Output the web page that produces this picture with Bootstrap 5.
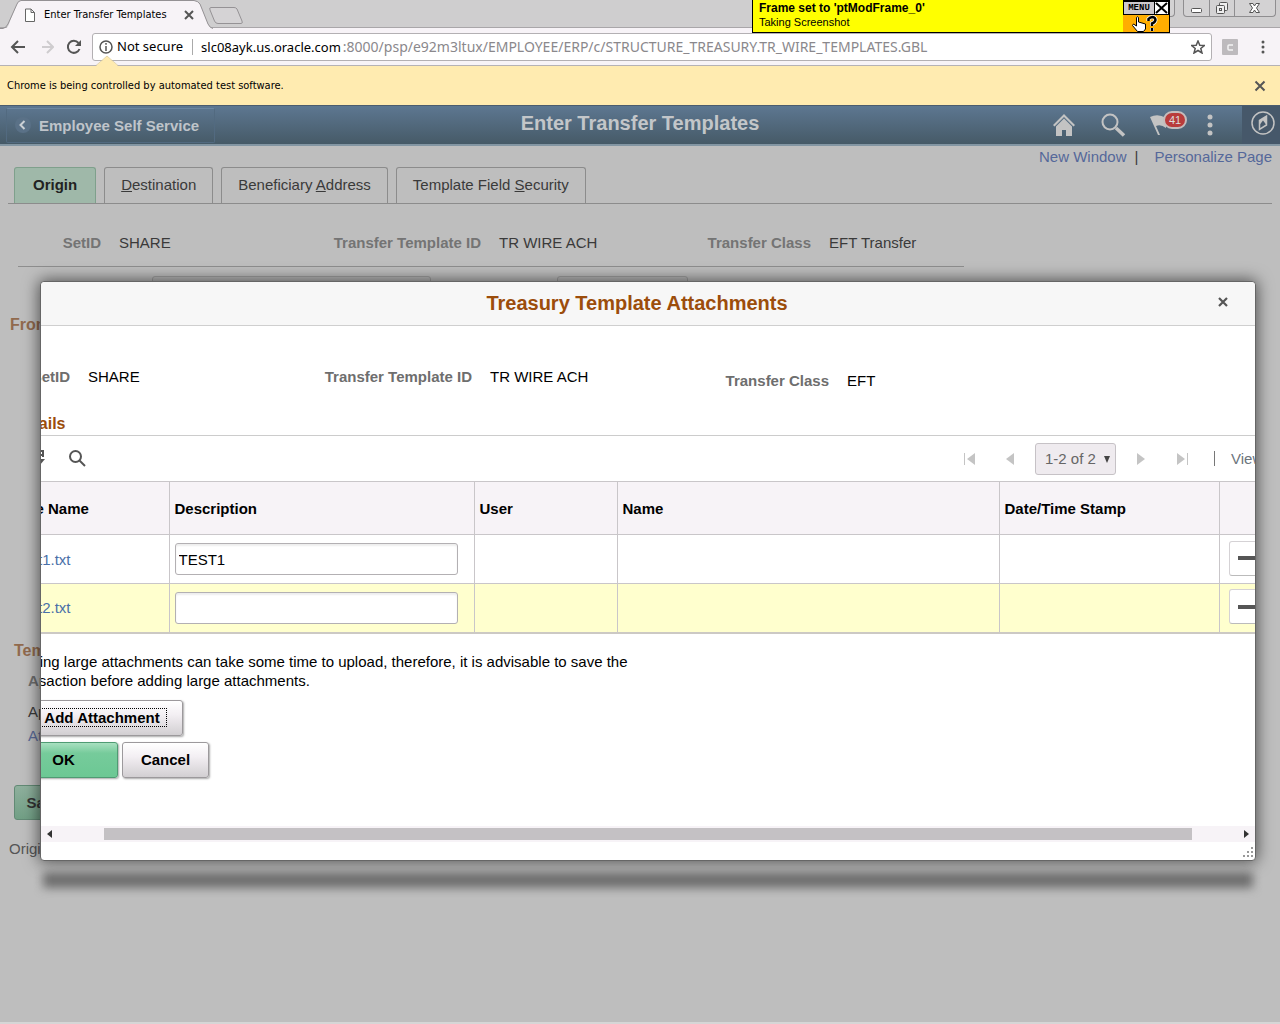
<!DOCTYPE html>
<html lang="en">
<head>
<meta charset="utf-8">
<meta name="viewport" content="width=device-width, initial-scale=1">
<title>Enter Transfer Templates</title>
<link rel="stylesheet" href="https://cdn.jsdelivr.net/npm/bootstrap@5.3.0/dist/css/bootstrap.min.css">
<style>
body{font-family:"Liberation Sans",Arial,sans-serif;font-size:15px;line-height:19px;color:#000;background:#bebebe;min-height:100vh;overflow:hidden}
svg{display:block;flex:none}
button{font-family:inherit}
.plain{background:none;border:0;padding:0;line-height:0;color:inherit}
/* browser window */
.tabstrip{height:28px;background:#cfcecf;border-bottom:1px solid #a9a6a9}
.chrome{font-family:"DejaVu Sans Condensed","Noto Sans",sans-serif;font-size:11px}
.browsertab{width:208px;height:29px;padding:0 14px 0 24px;position:relative}
.browsertab>svg.shape{position:absolute;left:0;top:0}
.browsertab>*{position:relative}
.winbtns{height:17px;border:1px solid #8f8e90;border-top:0;border-radius:0 0 4px 4px;margin-right:4px;background:#d3d2d3;color:#666}
.winbtns button{width:25px;display:flex;align-items:center;justify-content:center}
.winbtns button:last-child{width:41px}
.winbtns button+button{border-left:1px solid #8f8e90}
.winbtns.spare{width:32px;margin-right:8px}
.toolbar{height:38px;background:#f7f3f7;border-bottom:1px solid #b5b2b5;padding:0 14px 0 10px;color:#555}
.address{height:28px;border:1px solid #b3b0b3;border-radius:3px;background:#fff;color:#000;font-family:"Noto Sans",sans-serif;font-size:13px;padding:0 6px}
.address .rest{color:#8a888c;font-size:14px;margin-left:2px}
.infobar{height:39px;background:#ffebb0;padding:0 14px 0 7px;position:relative}
.infobar .notch{position:absolute;left:96px;top:-11px}
.notice{position:absolute;left:752px;top:0;width:418px;height:33px;background:#ff0;border:1px solid #000;border-top:0;font-size:11px;line-height:14px;z-index:5}
.notice .words{padding:1px 0 0 6px}
.notice b{font-size:12px}
.notice .side{width:46px;background:#ffae00}
.notice .side .top{height:15px;background:#cdc9cd;border:1px solid #000;border-top:2px solid #000}
.notice .side .cap{font-family:"Liberation Mono",monospace;font-size:9px;line-height:12px;font-weight:bold;width:31px;border-right:1px solid #000}
/* application banner */
.banner{height:41px;background:linear-gradient(#5d7791,#465a67);border-bottom:2px solid #8396a3;border-top:1px solid #4b5c6e;color:#c3c6c9;position:relative}
.backbtn{margin-left:6px;width:209px;height:35px;border:1px solid #526a80;border-top-color:#6d87a1;border-radius:2px;color:#bfc4ca;background:none;font-weight:bold;padding-left:8px;gap:8px}
.banner h1{font-size:20px;line-height:24px;font-weight:bold;margin:0;position:absolute;left:0;right:0;top:5px;text-align:center;pointer-events:none}
.icons{gap:24px}
.flagbadge{position:absolute;left:13px;top:-3px;width:24px;height:18px;border:2px solid #c5bcbc;border-radius:9px;background:#b93b3b;color:#ddd;font-size:11px;line-height:14px;text-align:center}
.navbtn{width:38px;height:38px;background:#46586a;margin-left:4px}
/* page under the dialog */
.toplinks{height:21px;padding:1px 8px 0 0;gap:8px}
.toplinks a{color:#55689a;text-decoration:none}
.pagetabs{margin:0 8px;padding-left:6px;gap:8px;border-bottom:1px solid #8c8c8c}
.pagetabs .nav-link{height:36px;border:1px solid #8c8c8c;border-bottom:0;border-radius:3px 3px 0 0;padding:7px 16px;color:#3a3a3a}
.pagetabs .nav-link.active{background:#9fb8a9;border-color:#7fa08c;font-weight:bold;color:#222;padding:7px 18px}
.fields{display:grid;align-items:center}
.fields b,.tag{color:#6e6e6e}
.fields b{text-align:right;padding-right:18px}
.under{color:#3a3a3a}
.under .fields{grid-template-columns:119px 211px 169px 330px auto;padding-top:29px;padding-bottom:14px}
.under .fields b{color:#747474}
.rule{width:946px;margin-left:18px;border-top:1px solid #8e8e8e}
.ghosts{padding:9px 0 0 152px;gap:126px}
.ghosts input{height:32px;width:279px;border:1px solid #a0a0a0;border-radius:3px;background:#bababa}
.ghosts input+input{width:131px}
.brown{color:#916a4d;font-weight:bold;font-size:16px}
.fromhead{padding:7px 0 0 10px}
.lower{padding:307px 0 0 14px}
.inner{padding:11px 0 0 14px;display:flex;flex-direction:column}
.inner span{padding-top:12px}
.inner a{padding-top:5px;color:#5b6b98;text-decoration:none}
.savebtn{width:60px;height:35px;margin-top:40px;border:1px solid #628a75;border-radius:3px;background:linear-gradient(#8fb09d,#719f85);color:#333;font-weight:bold}
.trail{margin:19px 0 0 -5px;color:#555}
/* dialog */
.dialog{position:absolute;left:40px;right:24px;top:281px;background:#fff;border:1px solid #666;border-radius:4px;box-shadow:0 0 16px 1px rgba(0,0,0,.6);z-index:3}
.dialog .strip{position:absolute;left:2px;right:2px;bottom:-28px;height:16px;background:#6e6e6e;filter:blur(5px);z-index:-1}
.dialog .head{height:44px;background:#f7f7f7;border-bottom:1px solid #cfcfcf;border-radius:4px 4px 0 0;position:relative}
.dialog h2{font-size:20px;line-height:24px;font-weight:bold;color:#9c4d0b;margin:0;padding:0 22px 2px 0}
.dialog .head button{position:absolute;right:27px;top:15px;color:#555}
.view{height:500px;overflow:hidden}
.sheet{width:1306px;margin-left:-28px}
.sheet .fields{grid-template-columns:75px 236px 166px 357px auto;padding:41px 0 0;align-items:start}
.sheet .detailhead{font-size:16px;font-weight:bold;color:#9c4d0b;padding-top:24px;height:46px;border-bottom:1px solid #ccc}
.gridbar{height:45px;color:#555;padding-left:14px}
.pager{color:#c4c4c4;width:371px}
.pager select{width:81px;height:32px;border:1px solid #c6c2c6;border-radius:3px;background:#efebef url("data:image/svg+xml,%3Csvg xmlns='http://www.w3.org/2000/svg' width='7' height='7'%3E%3Cpath d='M0 0h6L3 7z' fill='%23444'/%3E%3C/svg%3E") no-repeat 68px 12px;appearance:none;color:#666;padding:0 0 0 9px;margin:0 21px}
.files{table-layout:fixed;width:100%;margin:0;border-bottom:2px solid #ccc9c4}
.files th,.files td{border:1px solid #c9c6c9;border-left:0;padding:0 5px;vertical-align:middle}
.files th{height:53px;background:#f7f3f7;color:#000}
.files td{height:49px}
.files tr.hot td{background:#ffffce}
.files a{color:#4a70a8;text-decoration:none}
.files input{width:283px;height:32px;border:1px solid #b3b0b3;border-radius:3px;padding:0 3px;box-shadow:inset 0 2px 2px #eee;background:#fff;display:block}
.minus{width:45px;height:35px;background:#fff;border:1px solid #d5d2d5;border-bottom-color:#bbb;border-radius:3px;margin-left:4px;padding-left:8px}
.note{padding:18px 0 0;width:630px}
.actions{padding:10px 0 0 4px;display:flex;flex-direction:column;gap:6px}
.actionbtn{height:36px;border:1px solid #9c999c;border-radius:3px;background:linear-gradient(#fff,#f3eff3 40%,#d2cfd2);font-weight:bold;box-shadow:1px 1px 2px #aaa;padding:0;color:#000}
.actionbtn.go{background:linear-gradient(#a8e0c0,#76cb9b 30%,#6cc894);border-color:#4f9b73;width:101px;padding-right:8px}
.actionbtn.add{width:162px;margin-left:4px}
.actionbtn.cancel{width:87px;margin-left:4px}
.dotted{outline:1px dotted #000;padding:0 6px}
.scroller{height:16px;background:#f7f3f7;padding:0 5px;margin-bottom:18px}
.scroller .thumb{height:12px;background:#c4c1c4;margin:0 52px}
.grip{position:absolute;right:1px;bottom:2px}
.foot{position:absolute;left:0;right:0;bottom:0;height:2px;background:#d6d6d6}
</style>
<script src="https://cdn.jsdelivr.net/npm/bootstrap@5.3.0/dist/js/bootstrap.bundle.min.js"></script>
</head>
<body class="position-relative">
<header class="chrome">
  <div class="tabstrip d-flex align-items-start">
    <div class="browsertab d-flex align-items-center">
      <svg class="shape" width="214" height="29"><path d="M0 28.500H5C8 28 9 24 10 21L17 4Q18 1 21 .5H194Q198 1 200 4L208 24Q209 28 214 28.500V29H0z" fill="#f7f3f7"/><path d="M0 28.500H3Q6 28 8 24L17 4Q18 1 21 .5H194Q198 1 200 4L208 24Q210 28 213 28.500" fill="none" stroke="#949194"/></svg>
      <svg width="12" height="14" fill="#fff" stroke="#666"><path d="M1.500 1H7L10.500 4.500V13.500H1.500zM7 1V4.500H10.500"/></svg>
      <span class="ms-2 text-nowrap">Enter Transfer Templates</span>
      <button class="plain ms-auto" aria-label="Close tab"><svg width="10" height="10" stroke="#555" stroke-width="2"><path d="M1 1L9 9M9 1L1 9"/></svg></button>
    </div>
    <button class="plain mt-1" aria-label="New tab"><svg width="36" height="20" fill="#d5d3d5" stroke="#959295"><path d="M3 3.500H26Q28 3.500 29 5L34 17Q35 19.500 33 19.500H10Q7.500 19.500 6.500 17L2 6Q1 3.500 3 3.500z"/></svg></button>
    <div class="winbtns spare ms-auto"></div>
    <div class="winbtns d-flex">
      <button class="plain" aria-label="Minimize"><svg width="12" height="12" fill="#fff" stroke="#555"><rect x=".5" y="6.500" width="10" height="4" rx="1"/></svg></button>
      <button class="plain" aria-label="Restore"><svg width="16" height="14" fill="#eee" stroke="#555"><rect x="5.500" y="1.500" width="8" height="8" rx="1"/><rect x="2.500" y="4.500" width="8" height="8" rx="1"/><rect x="5.500" y="7.500" width="2" height="2"/></svg></button>
      <button class="plain" aria-label="Close window"><svg width="12" height="12" fill="#fff" stroke="#555"><path d="M.5 1.500H4L5.500 4 7 1.500H10.500L7.500 6 10.500 10.500H7L5.500 8 4 10.500H.5L3.500 6z"/></svg></button>
    </div>
  </div>
  <div class="toolbar d-flex align-items-center">
    <button class="plain" aria-label="Back"><svg width="16" height="16" fill="none" stroke="#555" stroke-width="2"><path d="M15 8H2M8 2L2 8L8 14"/></svg></button>
    <button class="plain ms-3" aria-label="Forward" disabled><svg width="12" height="16" fill="none" stroke="#cfcccf" stroke-width="2"><path d="M0 8H11M5 2L11 8L5 14"/></svg></button>
    <button class="plain ms-2 me-2 ps-1" aria-label="Reload"><svg width="18" height="16" fill="none" stroke="#555" stroke-width="2"><path d="M13.500 10A6 6 0 1 1 12.500 4"/><path d="M15 1V7H9z" fill="#555" stroke="none"/></svg></button>
    <div class="address d-flex align-items-center flex-grow-1 text-nowrap">
      <svg width="14" height="14" fill="none" stroke="#555" stroke-width="1.500"><circle cx="7" cy="7" r="6"/><path d="M7 6V11M7 3V4.800"/></svg>
      <span class="ms-1">Not secure</span><svg class="mx-2" width="2" height="16"><path d="M1.500 0V16" stroke="#aaa"/></svg><span>slc08ayk.us.oracle.com<span class="rest">:8000/psp/e92m3ltux/EMPLOYEE/ERP/c/STRUCTURE_TREASURY.TR_WIRE_TEMPLATES.GBL</span></span>
      <button class="plain ms-auto" aria-label="Bookmark this page"><svg width="14" height="14" fill="none" stroke="#555" stroke-width="1.500"><path d="M7 1L8.800 5.200L13.300 5.500L9.800 8.500L11 13L7 10.500L3 13L4.200 8.500L.7 5.500L5.200 5.200z"/></svg></button>
    </div>
    <svg class="ms-2" width="20" height="16"><rect x="2" width="16" height="16" rx="1" fill="#bdbabd"/><path d="M13 6H9Q8 6 8 7V10Q8 11 9 11H13" fill="none" stroke="#f3f3f3" stroke-width="1.500"/></svg>
    <button class="plain ms-3 ps-1" aria-label="Menu"><svg width="6" height="14" fill="#555"><circle cx="3" cy="2" r="1.500"/><circle cx="3" cy="7" r="1.500"/><circle cx="3" cy="12" r="1.500"/></svg></button>
  </div>
  <div class="infobar d-flex align-items-center">
    <svg class="notch" width="22" height="12"><path d="M0 11L11 1L22 11V12H0z" fill="#ffebb0"/><path d="M0 10.500L11 1L22 10.500" fill="none" stroke="#d8c99a" stroke-width=".7"/></svg>
    <span>Chrome is being controlled by automated test software.</span>
    <button class="plain ms-auto" aria-label="Dismiss"><svg width="12" height="12" stroke="#555" stroke-width="2"><path d="M1.500 1.500L10.500 10.500M10.500 1.500L1.500 10.500"/></svg></button>
  </div>
</header>
<div class="notice d-flex">
  <div class="words flex-grow-1"><b>Frame set to 'ptModFrame_0'</b><br>Taking Screenshot</div>
  <div class="side">
    <div class="top d-flex"><span class="cap text-center">MENU</span><svg width="13" height="12" stroke="#000" stroke-width="2" fill="#fff"><path d="M0 0H13V12H0z" stroke="none"/><path d="M1 1L12 11M12 1L1 11"/></svg></div>
    <svg width="46" height="17"><path d="M13.500 2.500Q14.500 1 15.500 2.500V7L19 8L22.500 9V14L20.500 16.500H14.500L9.500 10.500L10.500 9L13.500 11z" fill="#fff" stroke="#000"/><g fill="none"><path d="M25.500 6V4Q27 2 29.500 2Q32.500 2.500 32.500 5Q32 7.500 29 8.500V11M29 13V16" stroke="#fff" stroke-width="4"/><path d="M25.500 6V4Q27 2 29.500 2Q32.500 2.500 32.500 5Q32 7.500 29 8.500V11M29 13V16" stroke="#000" stroke-width="2.500"/></g></svg>
  </div>
</div>

<div class="banner d-flex align-items-center">
  <button class="backbtn d-flex align-items-center"><svg width="16" height="16"><circle cx="8" cy="8" r="8" fill="#5a7187"/><path d="M9.500 4L5.500 8L9.500 12" fill="none" stroke="#cbd0d5" stroke-width="2"/></svg>Employee Self Service</button>
  <h1>Enter Transfer Templates</h1>
  <div class="icons d-flex align-items-center ms-auto">
    <a href="#" aria-label="Home"><svg width="24" height="24" fill="#c3c3c3"><path d="M1 12L12 1L23 12L21.500 13.500L12 4L2.500 13.500z"/><path d="M4 13.500L12 5.500L20 13.500V23H14V17H10V23H4z"/></svg></a>
    <a href="#" aria-label="Search"><svg width="26" height="24" fill="none" stroke="#c3c3c3"><circle cx="10" cy="9" r="7.500" stroke-width="2"/><path d="M16 15L24 22.500" stroke-width="3.500"/></svg></a>
    <a href="#" class="position-relative text-decoration-none" aria-label="Notifications"><svg width="32" height="22"><path d="M0 3Q8-1 16 4V14Q11 10 6 12L10 21H8z" fill="#c3c3c3"/></svg><span class="flagbadge">41</span></a>
    <a href="#" aria-label="Actions"><svg width="8" height="24" fill="#c3c3c3"><circle cx="4" cy="4" r="2.500"/><circle cx="4" cy="12" r="2.500"/><circle cx="4" cy="20" r="2.500"/></svg></a>
    <a href="#" class="navbtn" aria-label="NavBar"><svg width="38" height="38" fill="none" stroke="#c3c3c3" stroke-width="1.500"><circle cx="21" cy="17" r="11"/><path d="M17.500 14.500L24.500 10V19L17.500 23.500z"/><path d="M17.500 14.500L24.500 10V19L21 14.500L17.500 19z" fill="#c3c3c3" stroke="none"/></svg></a>
  </div>
</div>

<main class="under">
  <div class="toplinks d-flex justify-content-end"><a href="#">New Window</a><span>|</span><a class="ms-2" href="#">Personalize Page</a></div>
  <nav class="pagetabs d-flex">
    <a class="nav-link active" href="#">Origin</a>
    <a class="nav-link" href="#"><u>D</u>estination</a>
    <a class="nav-link" href="#">Beneficiary <u>A</u>ddress</a>
    <a class="nav-link" href="#">Template Field <u>S</u>ecurity</a>
  </nav>
  <div class="fields"><b>SetID</b><span>SHARE</span><b>Transfer Template ID</b><span class="d-flex justify-content-between">TR WIRE ACH<b>Transfer Class</b></span><span>EFT Transfer</span></div>
  <div class="rule"></div>
  <div class="ghosts d-flex"><input type="text" aria-label="Description"><input type="text" aria-label="Status"></div>
  <div class="fromhead brown">From</div>
  <div class="lower">
    <div class="brown">Tem</div>
    <div class="inner"><b class="tag">App</b><span>App</span><a href="#">Att</a></div>
    <button class="savebtn">Save</button>
    <div class="trail">Origin</div>
  </div>
</main>

<section class="dialog" role="dialog" aria-labelledby="dlg">
  <div class="strip"></div>
  <div class="head d-flex align-items-center justify-content-center"><h2 id="dlg">Treasury Template Attachments</h2><button class="plain" aria-label="Close"><svg width="10" height="10" stroke="#555" stroke-width="2.200"><path d="M1 1L9 9M9 1L1 9"/></svg></button></div>
  <div class="view">
    <div class="sheet">
      <div class="fields"><b>SetID</b><span>SHARE</span><b>Transfer Template ID</b><span class="d-flex justify-content-between">TR WIRE ACH<b class="pt-1">Transfer Class</b></span><span class="pt-1">EFT</span></div>
      <div class="detailhead">Details</div>
      <div class="gridbar d-flex align-items-center">
        <svg width="18" height="18" fill="none" stroke="#555" stroke-width="2"><path d="M1 1H16V7M1 1V14H9M1 5H16M12 6V10M6 9H11"/><path d="M8 9H18L13 15z" fill="#555" stroke="none"/></svg>
        <button class="plain ms-4" aria-label="Find"><svg width="17" height="17" fill="none" stroke="#555" stroke-width="2"><circle cx="6.500" cy="6.500" r="5.500"/><path d="M10.500 10.500L16 16"/></svg></button>
        <div class="pager d-flex align-items-center ms-auto">
          <button class="plain me-4 ps-3" aria-label="First" disabled><svg width="18" height="12" fill="#c4c4c4"><path d="M0 0H1V12H0zM11 0V12L3 6z"/></svg></button>
          <button class="plain" aria-label="Previous" disabled><svg width="8" height="12" fill="#c4c4c4"><path d="M8 0V12L0 6z"/></svg></button>
          <select aria-label="Rows shown"><option>1-2 of 2</option></select>
          <button class="plain" aria-label="Next" disabled><svg width="8" height="12" fill="#c4c4c4"><path d="M0 0V12L8 6z"/></svg></button>
          <button class="plain ms-4 ps-2" aria-label="Last" disabled><svg width="12" height="12" fill="#c4c4c4"><path d="M0 0V12L8 6zM10 0H11V12H10z"/></svg></button>
          <svg class="ms-4 me-3" width="2" height="16"><path d="M1.500 0V15" stroke="#777"/></svg>
          <a href="#" class="text-decoration-none text-secondary">View All</a>
        </div>
      </div>
      <table class="files">
        <colgroup><col width="156"><col width="305"><col width="143"><col width="382"><col width="220"><col></colgroup>
        <thead><tr><th>File Name</th><th>Description</th><th>User</th><th>Name</th><th>Date/Time Stamp</th><th></th></tr></thead>
        <tbody>
          <tr><td><a href="#">test1.txt</a></td><td><input type="text" value="TEST1" aria-label="Description 1"></td><td></td><td></td><td></td><td><button class="minus" aria-label="Delete row 1"><svg width="18" height="4"><path d="M0 0H18V4H0z" fill="#555"/></svg></button></td></tr>
          <tr class="hot"><td><a href="#">test2.txt</a></td><td><input type="text" aria-label="Description 2"></td><td></td><td></td><td></td><td><button class="minus" aria-label="Delete row 2"><svg width="18" height="4"><path d="M0 0H18V4H0z" fill="#555"/></svg></button></td></tr>
        </tbody>
      </table>
      <p class="note mb-0">Adding large attachments can take some time to upload, therefore, it is advisable to save the transaction before adding large attachments.</p>
      <div class="actions">
        <div><button class="actionbtn add"><span class="dotted">Add Attachment</span></button></div>
        <div class="d-flex"><button class="actionbtn go">OK</button><button class="actionbtn cancel">Cancel</button></div>
      </div>
    </div>
  </div>
  <div class="scroller d-flex align-items-center">
    <svg width="6" height="8" fill="#333"><path d="M6 0V8L1 4z"/></svg>
    <div class="thumb flex-grow-1"></div>
    <svg width="6" height="8" fill="#333"><path d="M0 0V8L5 4z"/></svg>
  </div>
  <svg class="grip" width="12" height="12" fill="#999"><path d="M9 1h2v2H9zM5 5h2v2H5zM9 5h2v2H9zM1 9h2v2H1zM5 9h2v2H5zM9 9h2v2H9z"/></svg>
</section>
<div class="foot"></div>
</body>
</html>
